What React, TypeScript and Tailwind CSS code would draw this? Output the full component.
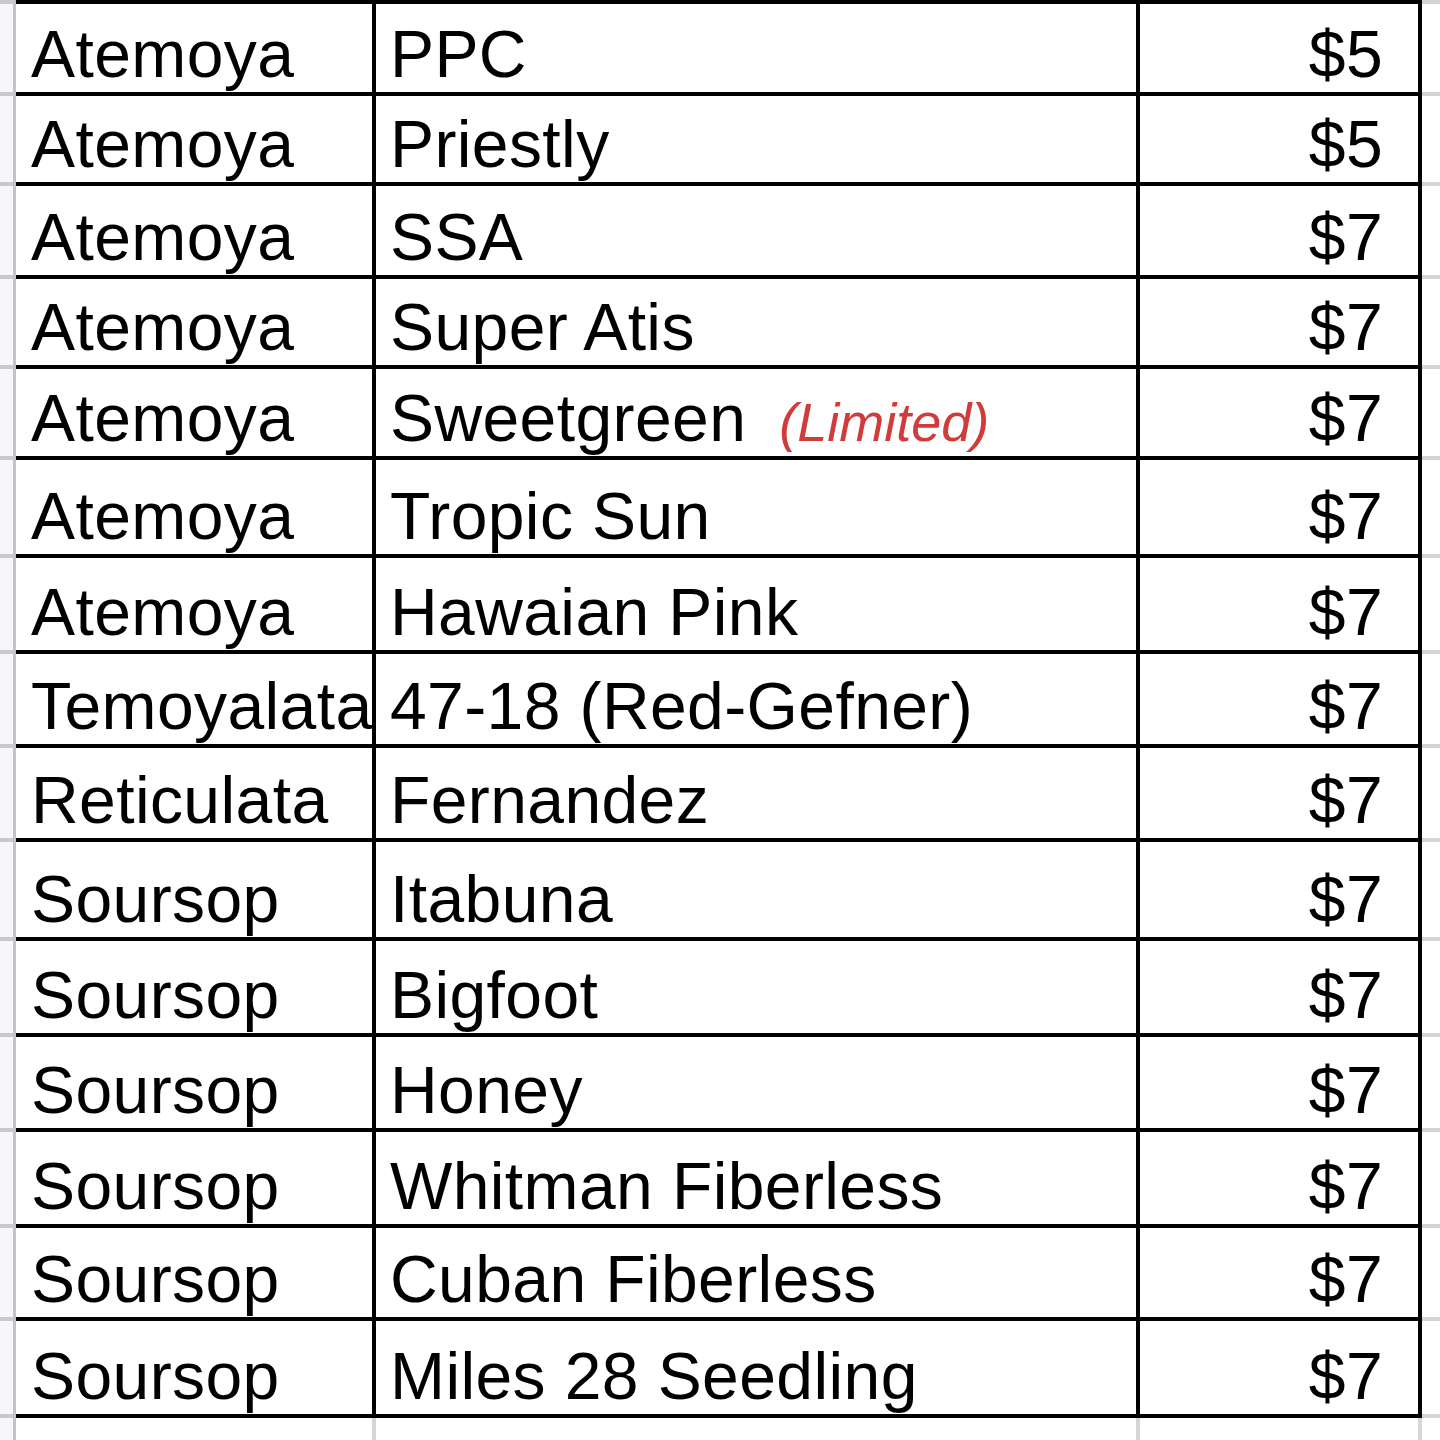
import React from "react";

interface Row {
  species: string;
  variety: string;
  price: string;
  height: number;
  note?: string;
}

// row heights include the 4px bottom border
const rows: Row[] = [
  { species: "Atemoya", variety: "PPC", price: "$5", height: 92 },
  { species: "Atemoya", variety: "Priestly", price: "$5", height: 90 },
  { species: "Atemoya", variety: "SSA", price: "$7", height: 93 },
  { species: "Atemoya", variety: "Super Atis", price: "$7", height: 90 },
  { species: "Atemoya", variety: "Sweetgreen", price: "$7", height: 91, note: "(Limited)" },
  { species: "Atemoya", variety: "Tropic Sun", price: "$7", height: 98 },
  { species: "Atemoya", variety: "Hawaian Pink", price: "$7", height: 96 },
  { species: "Temoyalata", variety: "47-18 (Red-Gefner)", price: "$7", height: 94 },
  { species: "Reticulata", variety: "Fernandez", price: "$7", height: 94 },
  { species: "Soursop", variety: "Itabuna", price: "$7", height: 99 },
  { species: "Soursop", variety: "Bigfoot", price: "$7", height: 96 },
  { species: "Soursop", variety: "Honey", price: "$7", height: 95 },
  { species: "Soursop", variety: "Whitman Fiberless", price: "$7", height: 96 },
  { species: "Soursop", variety: "Cuban Fiberless", price: "$7", height: 93 },
  { species: "Soursop", variety: "Miles 28 Seedling", price: "$7", height: 97 },
];

function SheetRow({ row }: { row: Row }) {
  return (
    <div className="flex shrink-0" style={{ height: row.height }}>
      <div className="w-[13px] shrink-0 bg-[#f7f7fa] border-b-[4px] border-[#c9c9cc]" />
      <div className="w-[3px] shrink-0 bg-[#c4c4c6]" />
      <div className="w-[356px] shrink-0 border-b-4 border-black flex items-end pl-[15px] pb-[5px] overflow-hidden whitespace-nowrap">
        {row.species}
      </div>
      <div className="w-[4px] shrink-0 bg-black" />
      <div className="w-[760px] shrink-0 border-b-4 border-black flex items-end pl-[14px] pb-[5px] whitespace-nowrap">
        <span>{row.variety}</span>
        {row.note && (
          <span className="ml-[33px] text-[54px] tracking-normal italic text-[#d23b3b] pb-[2px]">{row.note}</span>
        )}
      </div>
      <div className="w-[4px] shrink-0 bg-black" />
      <div className="w-[278px] shrink-0 border-b-4 border-black flex items-end justify-end pr-[35px] pb-[5px]">
        {row.price}
      </div>
      <div className="w-[4px] shrink-0 bg-black" />
      <div className="flex-1 bg-white border-b-[4px] border-[#d4d4d6]" />
    </div>
  );
}

export default function App() {
  return (
    <div className="w-[1440px] h-[1440px] bg-white overflow-hidden flex flex-col font-['Liberation_Sans',Arial,sans-serif] text-[66px] tracking-[0.4px] leading-none text-black">
      {/* top border */}
      <div className="flex h-[4px] shrink-0">
        <div className="w-[13px] bg-[#c9c9cc]" />
        <div className="w-[3px] bg-[#c4c4c6]" />
        <div className="w-[1406px] bg-black" />
        <div className="flex-1 bg-[#d4d4d6]" />
      </div>

      {rows.map((row, i) => (
        <SheetRow key={i} row={row} />
      ))}

      {/* empty gridlines below the table */}
      <div className="flex flex-1">
        <div className="w-[13px] shrink-0 bg-[#f7f7fa]" />
        <div className="w-[3px] shrink-0 bg-[#c4c4c6]" />
        <div className="w-[356px] shrink-0" />
        <div className="w-[4px] shrink-0 bg-[#d6d6d8]" />
        <div className="w-[760px] shrink-0" />
        <div className="w-[4px] shrink-0 bg-[#d6d6d8]" />
        <div className="w-[278px] shrink-0" />
        <div className="w-[4px] shrink-0 bg-[#d6d6d8]" />
        <div className="flex-1" />
      </div>
    </div>
  );
}
